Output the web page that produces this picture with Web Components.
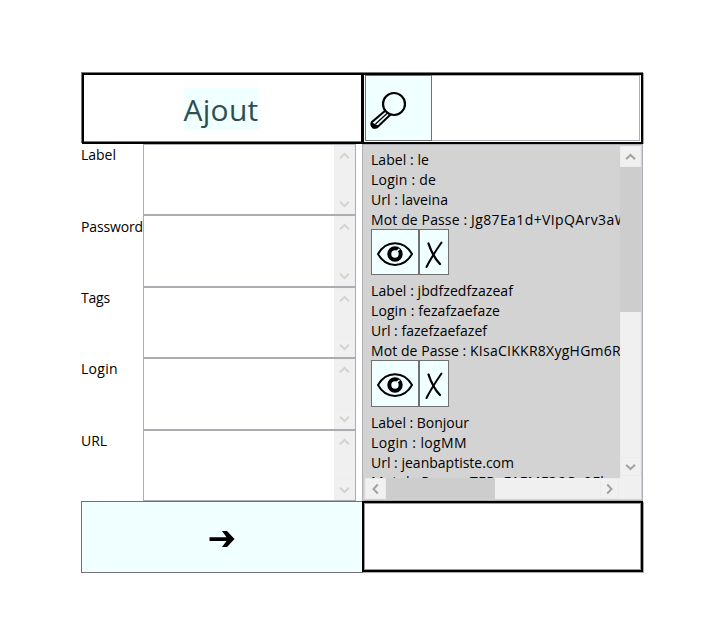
<!DOCTYPE html>
<html lang="fr">
<head>
<meta charset="utf-8">
<title>Ajout</title>
<style>
html, body { margin: 0; background: #fff; }
body { width: 722px; height: 634px; overflow: hidden; font: 14px/20px "Open Sans", "Noto Sans", sans-serif; color: #000; }
</style>
</head>
<body>
<vault-window></vault-window>
<script>
const define = (name, html, setup) => customElements.define(name, class extends HTMLElement {
  connectedCallback() {
    if (this.shadowRoot) return;
    const root = this.attachShadow({ mode: 'open' });
    root.innerHTML = html;
    if (setup) setup(this, root);
  }
});

// Text run spread to a given advance width with letter spacing.
define('fit-text', `<style>
:host { display: inline-block; white-space: pre; }
span { display: inline-block; }
</style><span><slot></slot></span>`, (el, root) => {
  const span = root.querySelector('span');
  const target = Number(el.getAttribute('width'));
  const n = el.textContent.length;
  span.style.letterSpacing = ((target - span.getBoundingClientRect().width) / n) + 'px';
});

define('scroll-arrow', `<style>
:host { display: flex; align-items: center; justify-content: center; box-sizing: border-box; flex: none; background: #f0f0f0; border: 1px solid #ebebeb; color: #a3a3a3; }
svg { display: block; }
:host([dir=down]) svg { transform: rotate(180deg); }
:host([dir=left]) svg { transform: rotate(-90deg); }
:host([dir=right]) svg { transform: rotate(90deg); }
</style><svg width="11" height="8" viewBox="0 0 11 8"><path d="M1 6.300 5.500 2 10 6.300" fill="none" stroke="currentColor" stroke-width="2"/></svg>`);

define('text-area', `<style>
:host { display: flex; justify-content: flex-end; box-sizing: border-box; border: 1px solid #abadb3; background: #fff; }
div { width: 21px; display: flex; flex-direction: column; justify-content: space-between; background: #f0f0f0; }
scroll-arrow { height: 21px; color: #d3d3d3; border-color: #eee; }
</style><div><scroll-arrow dir="up"></scroll-arrow><scroll-arrow dir="down"></scroll-arrow></div>`);

define('field-row', `<style>
:host { display: grid; grid-template-columns: 62px 213px; }
.l { padding-top: var(--drop, 1px); }
</style><div class="l"><slot></slot></div><text-area></text-area>`);

define('black-frame', `<style>
:host { display: flex; box-sizing: border-box; border: 2px solid #000; background: #fff; }
</style><slot></slot>`);

define('azure-button', `<style>
:host { display: flex; align-items: center; justify-content: center; box-sizing: border-box; border: 1px solid #707070; background: #f0ffff; }
</style><slot></slot>`);

define('vault-entry', `<style>
:host { display: block; }
.buttons { display: flex; height: var(--bh, 46px); margin-top: -1px; margin-bottom: 6px; }
.eye { width: 48px; } .del { width: 30px; }
svg { display: block; margin-top: 3px; }
.del svg { margin-top: 5px; }
</style>
<slot></slot>
<div class="buttons">
<azure-button class="eye"><svg width="38" height="28" viewBox="0 0 38 28"><path d="M2 14C10-.5 28-.5 36 14 28 28.500 10 28.500 2 14Z" fill="none" stroke="#000" stroke-width="2"/><circle cx="19" cy="14" r="5.700" fill="none" stroke="#000" stroke-width="4"/><path d="M20.500 11.500 23.500 9" stroke="#f0ffff" stroke-width="1.600"/></svg></azure-button>
<azure-button class="del"><svg width="20" height="28" viewBox="0 0 20 28"><path d="M4.500 2.500C7 10 11.500 18.500 16 23" fill="none" stroke="#000" stroke-width="2.300" stroke-linecap="round"/><path d="M17.500 1.500C13 8 7 17 2.500 26" fill="none" stroke="#000" stroke-width="2" stroke-linecap="round"/></svg></azure-button>
</div>`);

define('vault-list', `<style>
:host { display: grid; grid-template-columns: 257px 21px 1px; grid-template-rows: 333px 21px 1px; box-sizing: border-box; width: 281px; height: 357px; border: 1px solid #abadb3; background: #d3d3d3; }
.view { overflow: hidden; padding: 5px 0 0 8px; min-width: 0; min-height: 0; }
.v { grid-row: 1 / 3; grid-column: 2; margin-top: 1px; background: #f0f0f0; display: grid; grid-template-rows: 21px 145px 1fr 19px 23px; }
.h { grid-row: 2; grid-column: 1; margin-left: 2px; background: #f0f0f0; display: grid; grid-template-columns: 21px 109px 1fr 19px 1px; }
.thumb { background: #cdcdcd; }
.v .t { border-left: 1px solid #ebebeb; border-right: 1px solid #ebebeb; }
</style>
<div class="view"><slot></slot></div>
<div class="v"><scroll-arrow dir="up"></scroll-arrow><div class="thumb"></div><div class="t"></div><scroll-arrow dir="down"></scroll-arrow></div>
<div class="h"><scroll-arrow dir="left"></scroll-arrow><div class="thumb"></div><div></div><scroll-arrow dir="right"></scroll-arrow></div>`);

define('vault-window', `<style>
:host { display: grid; box-sizing: border-box; width: 722px; height: 634px; padding: 72px 79px 61px 81px; grid-template-columns: 281px 281px; grid-template-rows: 72px 357px 72px; }
.head { margin: 1px -1px 0 1px; box-shadow: -1px -1px 0 #777, inset 0 -1px 0 #777; align-items: center; justify-content: center; }
.title { background: #f0ffff; color: #2f4f4f; font-size: 30px; line-height: 44px; height: 42px; width: 75px; margin: 0 3px 0 0; }
.search { margin-top: 1px; padding: 0 1px 1px; box-shadow: 0 -1px 0 #777, 1px 0 0 #aaa; }
.search azure-button { width: 67px; height: 66px; }
.search .input { flex: 1; border: 1px solid #abadb3; border-left: 0; }
.fields { display: grid; grid-template-rows: 71px 72px 71px 72px 71px; }
.send { width: 282px; }
.foot { width: 281px; height: 71px; box-shadow: inset 0 0 0 1px #999, 1px 1px 0 #aaa; }
svg { display: block; }
vault-entry div { height: 20px; white-space: pre; }
vault-entry .peek { margin-top: -1px; height: 21px; }
</style>
<black-frame class="head"><div class="title"><fit-text width="75">Ajout</fit-text></div></black-frame>
<black-frame class="search"><azure-button><svg width="40" height="42" viewBox="0 0 40 42" style="margin:2px 25px 0 0"><circle cx="28" cy="16" r="11" fill="none" stroke="#000" stroke-width="2.200"/><path d="M19.500 22.500 6 34Q4.500 37 7 39.500 10 40.500 12 38.500L24.500 26.500" fill="none" stroke="#000" stroke-width="2"/><path d="M21.500 25 9.500 36" stroke="#000" stroke-width="1.300"/><path d="M5 34 13 38Q9 42 6.500 39.500 4 37 5 34Z" fill="#000"/></svg></azure-button><div class="input"></div></black-frame>
<div class="fields">
<field-row><fit-text width="35">Label</fit-text></field-row>
<field-row style="--drop:2px"><fit-text width="62">Password</fit-text></field-row>
<field-row><fit-text width="29">Tags</fit-text></field-row>
<field-row><fit-text width="37">Login</fit-text></field-row>
<field-row><fit-text width="26">URL</fit-text></field-row>
</div>
<vault-list>
<vault-entry>
<div><fit-text width="58">Label : le</fit-text></div>
<div><fit-text width="65">Login : de</fit-text></div>
<div><fit-text width="77">Url : laveina</fit-text></div>
<div><fit-text width="100">Mot de Passe : </fit-text><fit-text width="157">Jg87Ea1d+VIpQArv3aW</fit-text></div>
</vault-entry>
<vault-entry style="--bh:47px">
<div><fit-text width="142">Label : jbdfzedfzazeaf</fit-text></div>
<div><fit-text width="129">Login : fezafzaefaze</fit-text></div>
<div><fit-text width="116">Url : fazefzaefazef</fit-text></div>
<div><fit-text width="99">Mot de Passe : </fit-text><fit-text width="151">KIsaCIKKR8XygHGm6R</fit-text></div>
</vault-entry>
<vault-entry>
<div><fit-text width="98">Label : Bonjour</fit-text></div>
<div><fit-text width="96">Login : logMM</fit-text></div>
<div><fit-text width="143">Url : jeanbaptiste.com</fit-text></div>
<div class="peek"><fit-text width="99">Mot de Passe : </fit-text><fit-text width="158">TFPgF1FMF36Ce0Fkzal</fit-text></div>
</vault-entry>
</vault-list>
<azure-button class="send"><svg width="28" height="20" viewBox="0 0 28 20" style="margin-top:3px"><path d="M1.500 8.200H18.500L14 2H19L26.500 10 19 18H14L18.500 12H1.500Z"/></svg></azure-button>
<black-frame class="foot"></black-frame>`);
</script>
</body>
</html>
